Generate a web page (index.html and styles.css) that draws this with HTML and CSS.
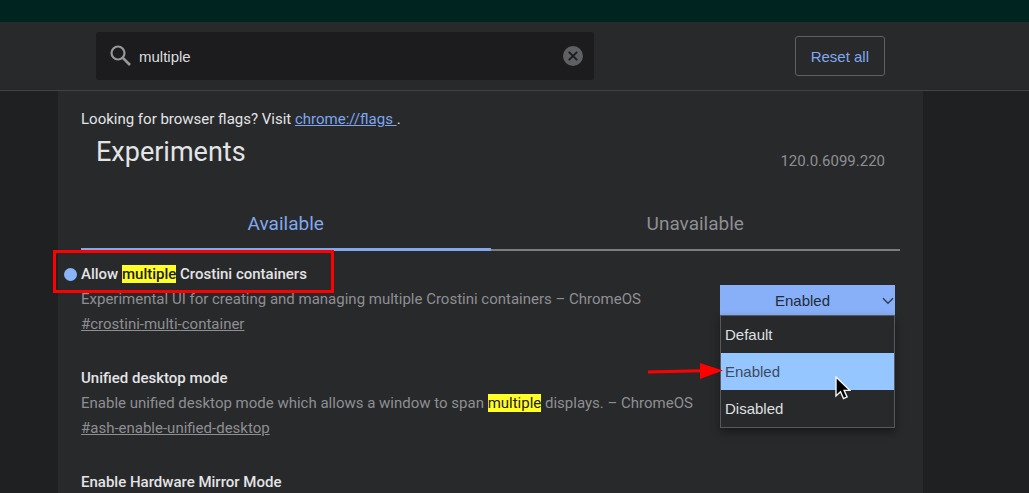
FILE: index.html
```html
<!DOCTYPE html>
<html lang="en">
<head>
<meta charset="utf-8">
<title>Experiments</title>
<link rel="stylesheet" href="styles.css">
</head>
<body>
<div class="frame-strip"></div>
<header class="toolbar">
  <div class="toolbar-inner">
    <div class="search">
      <svg class="search-icon" viewBox="0 0 24 24" aria-hidden="true"><circle cx="9" cy="9" r="6.5" fill="none" stroke="currentColor" stroke-width="2.2"/><path d="M13.6 13.6l7.4 7.4" stroke="currentColor" stroke-width="2.7"/></svg>
      <input class="search-input" type="text" value="multiple" aria-label="Search flags">
      <button class="clear" type="button" aria-label="Clear search">
        <svg viewBox="0 0 20 20" aria-hidden="true"><circle cx="10" cy="10" r="10" fill="#5f6064"/><path d="M5.8 5.8l8.4 8.4M14.2 5.8l-8.4 8.4" stroke="#1c1c1e" stroke-width="1.9"/></svg>
      </button>
    </div>
    <button class="reset" type="button">Reset all</button>
  </div>
</header>
<main class="page">
  <div class="panel">
    <p class="hint">Looking for browser flags? Visit <a href="#flags">chrome://flags </a>.</p>
    <div class="heading">
      <h1>Experiments</h1>
      <span class="version">120.0.6099.220</span>
    </div>
    <div class="tabs" role="tablist">
      <button class="tab tab-selected" type="button" role="tab" aria-selected="true">Available</button>
      <button class="tab" type="button" role="tab" aria-selected="false">Unavailable</button>
    </div>
    <section class="flags">
      <article class="flag">
        <div class="flag-text">
          <h2 class="changed"><label for="crostini">Allow <mark>multiple</mark> Crostini containers</label></h2>
          <p>Experimental UI for creating and managing multiple Crostini containers – ChromeOS</p>
          <a class="permalink" href="#crostini-multi-container">#crostini-multi-container</a>
        </div>
        <div class="chooser">
          <select id="crostini" class="choice">
            <option>Default</option>
            <option selected>Enabled</option>
            <option>Disabled</option>
          </select>
          <svg class="chevron" viewBox="0 0 12 8" aria-hidden="true"><path d="M1 1.2l5 5 5-5" fill="none" stroke="#2f3b52" stroke-width="1.4"/></svg>
          <ul class="menu" role="listbox" aria-label="Options">
            <li role="option">Default</li>
            <li class="active" role="option" aria-selected="true">Enabled</li>
            <li role="option">Disabled</li>
          </ul>
          <svg class="arrow" viewBox="0 0 76 18" aria-hidden="true"><path d="M0 10L54 8.8" stroke="#f00" stroke-width="3"/><path d="M52 1l23 7.5L52 17z" fill="#f00"/></svg>
          <svg class="pointer" viewBox="0 0 16 24" aria-hidden="true"><path d="M1 1v19l4.5-4.2 3 6.8 3.6-1.6-3-6.6H15z" fill="#000" stroke="#f4f4f4" stroke-width="1.4"/></svg>
        </div>
      </article>
      <article class="flag">
        <div class="flag-text">
          <h2>Unified desktop mode</h2>
          <p>Enable unified desktop mode which allows a window to span <mark>multiple</mark> displays. – ChromeOS</p>
          <a class="permalink" href="#ash-enable-unified-desktop">#ash-enable-unified-desktop</a>
        </div>
      </article>
      <article class="flag">
        <div class="flag-text">
          <h2>Enable Hardware Mirror Mode</h2>
        </div>
      </article>
    </section>
  </div>
</main>
</body>
</html>
```

FILE: styles.css
```css
* { box-sizing: border-box; }
html, body { height: 100%; }
body {
  margin: 0;
  display: flex;
  flex-direction: column;
  overflow: hidden;
  background: #1f2022;
  color: #e3e4e6;
  font-family: Roboto, sans-serif;
  font-size: 15px;
  line-height: 25px;
}
h1, h2, p, ul { margin: 0; padding: 0; }
button { font: inherit; cursor: pointer; }

.frame-strip { flex: none; height: 22px; background: #002420; }

.toolbar {
  flex: none;
  padding: 10px 48px 10px 0;
  background: #28292b;
  border-bottom: 1px solid #414245;
}
.toolbar-inner {
  display: flex;
  align-items: center;
  justify-content: space-between;
  max-width: 865px;
  margin: 0 auto;
  padding: 0 38px;
}
.search {
  display: flex;
  align-items: center;
  flex: 0 1 498px;
  height: 48px;
  padding: 0 11px 0 13px;
  background: #1c1c1e;
  border-radius: 3px;
}
.search-icon { flex: none; width: 24px; height: 24px; color: #96979a; }
.search-input {
  flex: 1;
  min-width: 0;
  margin-left: 6px;
  padding: 0;
  border: 0;
  outline: 0;
  background: none;
  color: #dcdddf;
  font: 15px "Liberation Sans", Arial, sans-serif;
}
.clear { flex: none; width: 20px; height: 20px; padding: 0; border: 0; background: none; }
.clear svg { display: block; }
.reset {
  height: 40px;
  padding: 0 15px;
  border: 1px solid #5f6064;
  border-radius: 3px;
  background: none;
  color: #82a8ee;
  font-family: "Liberation Sans", Arial, sans-serif;
  font-size: 15px;
}

.page { flex: 1; min-height: 0; padding-right: 48px; }
.panel {
  max-width: 865px;
  height: 100%;
  margin: 0 auto;
  padding: 16px 23px 0;
  background: #28292b;
}
.hint a { color: #7ea6f0; }
.heading {
  display: flex;
  align-items: flex-start;
  justify-content: space-between;
  padding: 0 15px;
}
h1 { font-size: 27px; font-weight: 400; line-height: 40px; }
.version { padding-top: 17px; color: #8e8f92; }

.tabs { display: flex; align-items: flex-end; margin-top: 19px; }
.tab {
  flex: 1;
  height: 58px;
  padding: 4px 0 0;
  border: 0;
  border-bottom: 2px solid #7c7d80;
  background: none;
  color: #8e8f92;
  font-size: 19px;
}
.tab-selected { padding-top: 5px; color: #82a8ee; border-bottom: 3px solid #82a8ee; }

.flags {
  display: flex;
  flex-direction: column;
  gap: 29px;
  padding: 11px 5px 0 0;
}
.flag { display: flex; justify-content: space-between; color: #8e8f92; }
.flag-text { min-width: 0; }
h2 { width: fit-content; color: #e3e4e6; font-size: 15px; font-weight: 500; line-height: 25px; }
mark { background: #ffff25; color: #1f2022; }
.permalink { color: inherit; }
.changed { position: relative; }
.changed::before {
  content: "";
  position: absolute;
  left: -17px;
  top: 6px;
  width: 13px;
  height: 13px;
  border-radius: 50%;
  background: #8ab4f8;
}
.changed::after {
  content: "";
  position: absolute;
  inset: -12px -27px -6px -28px;
  border: 3px solid #f00;
}

.chooser {
  position: relative;
  flex: none;
  width: 175px;
  margin-top: 23px;
  font-family: "Liberation Sans", Arial, sans-serif;
  font-size: 15px;
}
.choice {
  display: block;
  width: 100%;
  height: 30px;
  padding: 0 10px 0 0;
  appearance: none;
  border: 0;
  border-radius: 0;
  background: #87b0f8;
  color: #242b38;
  font: inherit;
  text-align: center;
  text-align-last: center;
}
.chevron { position: absolute; right: 1px; top: 12px; width: 12px; height: 8px; }
.menu {
  position: absolute;
  z-index: 1;
  top: 30px;
  left: 0;
  right: 0;
  list-style: none;
  border: 1px solid #58595c;
  background: #28292b;
  color: #dfe0e2;
  box-shadow: 0 4px 8px rgba(0, 0, 0, 0.4);
}
.menu li { padding: 0 4px; line-height: 37px; }
.menu .active { background: #96c6ff; color: #3c4a5e; }
.arrow { position: absolute; z-index: 2; left: -72px; top: 77px; width: 76px; height: 18px; }
.pointer { position: absolute; z-index: 2; left: 115px; top: 91px; width: 16px; height: 24px; }
```
